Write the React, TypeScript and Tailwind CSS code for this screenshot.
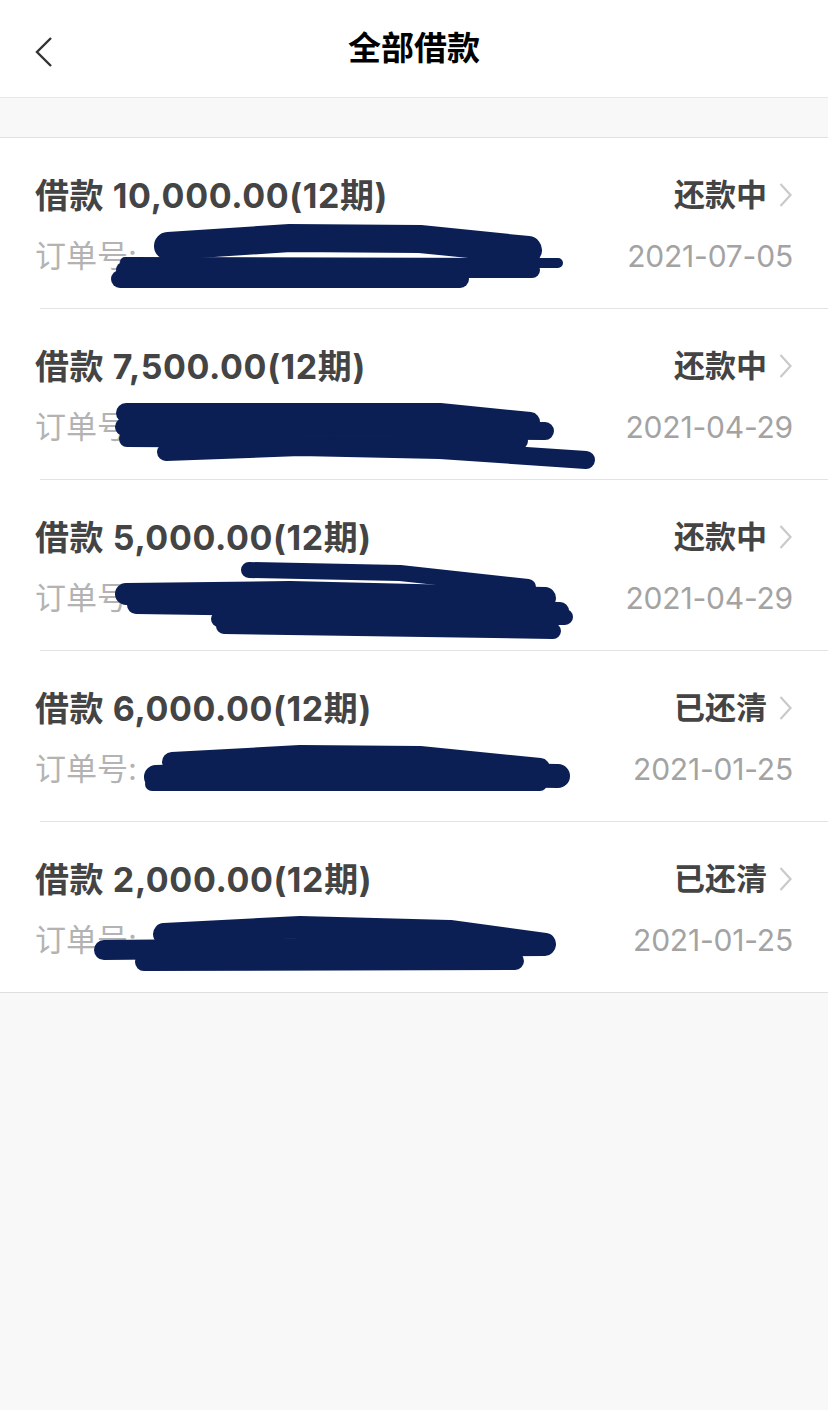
type Stroke = { d: string; w: number };

interface Loan {
  amount: string;
  status: string;
  date: string;
  scribble: Stroke[];
}

const FONT = "font-['Inter','Noto_Sans_CJK_SC',sans-serif]";

const loans: Loan[] = [
  {
    amount: '10,000.00',
    status: '还款中',
    date: '2021-07-05',
    scribble: [
      { d: 'M168,108 L290,100 L420,101 L528,112', w: 28 },
      { d: 'M125,124 L558,125', w: 10 },
      { d: 'M124,132 L532,132', w: 16 },
      { d: 'M120,141 L460,141', w: 18 },
    ],
  },
  {
    amount: '7,500.00',
    status: '还款中',
    date: '2021-04-29',
    scribble: [
      { d: 'M126,104 L440,104 L530,113', w: 20 },
      { d: 'M124,118 L545,122', w: 18 },
      { d: 'M127,130 L520,132', w: 16 },
      { d: 'M166,143 L300,138 L440,141 L586,151', w: 18 },
    ],
  },
  {
    amount: '5,000.00',
    status: '还款中',
    date: '2021-04-29',
    scribble: [
      { d: 'M249,90 L400,93 L528,107', w: 16 },
      { d: 'M126,114 L290,112 L545,118', w: 22 },
      { d: 'M136,125 L560,131', w: 18 },
      { d: 'M219,139 L565,137', w: 16 },
      { d: 'M224,146 L553,151', w: 16 },
    ],
  },
  {
    amount: '6,000.00',
    status: '已还清',
    date: '2021-01-25',
    scribble: [
      { d: 'M172,111 L300,104 L420,105 L540,117', w: 20 },
      { d: 'M156,126 L300,121 L558,125', w: 24 },
      { d: 'M152,133 L540,133', w: 14 },
    ],
  },
  {
    amount: '2,000.00',
    status: '已还清',
    date: '2021-01-25',
    scribble: [
      { d: 'M164,112 L300,105 L450,109 L545,122', w: 22 },
      { d: 'M104,128 L300,126 L545,124', w: 20 },
      { d: 'M144,140 L515,139', w: 18 },
    ],
  },
];

function Scribble({ strokes }: { strokes: Stroke[] }) {
  return (
    <svg className="absolute left-0 top-0 pointer-events-none" width="828" height="171" viewBox="0 0 828 171">
      {strokes.map((s, i) => (
        <path
          key={i}
          d={s.d}
          fill="none"
          stroke="#0b1f55"
          strokeWidth={s.w}
          strokeLinecap="round"
          strokeLinejoin="round"
        />
      ))}
    </svg>
  );
}

function LoanRow({ loan, last }: { loan: Loan; last: boolean }) {
  return (
    <div className="relative h-[171px]">
      <div className="flex flex-col pl-[35px] pr-[35px] pt-[37px]">
        <div className="flex items-center justify-between h-[40px]">
          <span className="text-[34px] font-bold text-[#444] tracking-[0.6px]">
            借款 {loan.amount}(12期)
          </span>
          <span className="flex items-center gap-[12px] mr-[1px]">
            <span className="text-[31px] font-semibold text-[#444]">{loan.status}</span>
            <svg width="13" height="26" viewBox="0 0 13 26">
              <path d="M1.5,2 L11.5,13 L1.5,24" fill="none" stroke="#cacaca" strokeWidth="2.2" />
            </svg>
          </span>
        </div>
        <div className="flex items-center justify-between h-[40px] mt-[21px]">
          <span className="text-[31px] text-[#b3b3b3]">订单号:</span>
          <span className="text-[30px] text-[#a3a3a3] tracking-[-0.2px]">{loan.date}</span>
        </div>
      </div>
      <Scribble strokes={loan.scribble} />
      <div className={last ? 'absolute bottom-0 left-0 right-0 h-px bg-[#dedede]' : 'absolute bottom-0 left-[40px] right-0 h-px bg-[#e3e3e3]'} />
    </div>
  );
}

export default function App() {
  return (
    <div className={`w-[828px] min-h-[1410px] bg-[#f8f8f8] ${FONT}`}>
      <div className="relative h-[98px] bg-white border-b border-[#e8e8e8] flex items-center justify-center">
        <svg className="absolute left-[34px] top-[36px]" width="22" height="32" viewBox="0 0 22 32">
          <path d="M17,2 L3,16 L17,30" fill="none" stroke="#333" strokeWidth="2.4" />
        </svg>
        <span className="text-[33px] font-bold text-black">全部借款</span>
      </div>
      <div className="h-[39px]" />
      <div className="bg-white border-t border-[#e0e0e0]">
        {loans.map((loan, i) => (
          <LoanRow key={i} loan={loan} last={i === loans.length - 1} />
        ))}
      </div>
    </div>
  );
}
